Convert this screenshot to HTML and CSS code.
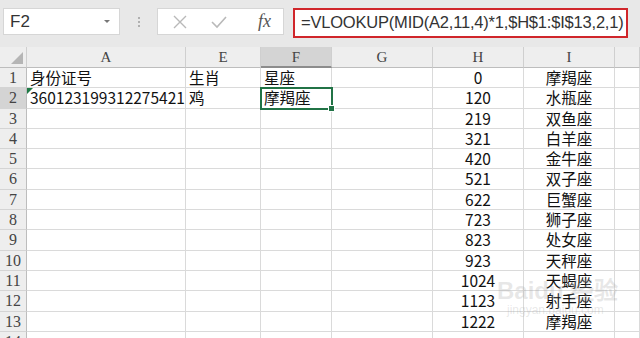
FILE: index.html
```html
<!DOCTYPE html>
<html lang="zh-CN">
<head>
    <meta charset="UTF-8">
    <title>VLOOKUP 星座</title>
    <link rel="stylesheet" href="styles.css">
</head>
<body>
    <div class="topbar">
        <div class="namebox">
            <span>F2</span>
            <span class="arrow"></span>
        </div>
        <div class="grip"><i></i><i></i><i></i></div>
        <div class="btnbox">
            <svg class="ico" width="16" height="16" viewBox="0 0 16 16"><path d="M2 2 L14 14 M14 2 L2 14" stroke="#b9b9b9" stroke-width="1.4" fill="none"/></svg>
            <svg class="ico" width="18" height="16" viewBox="0 0 18 16"><path d="M2 8 L7 13 L16 3" stroke="#b9b9b9" stroke-width="1.6" fill="none"/></svg>
            <span class="fx">fx</span>
        </div>
        <div class="formula">=VLOOKUP(MID(A2,11,4)*1,$H$1:$I$13,2,1)</div>
    </div>

    <div class="sheet">
        <div class="hd corner"><span class="tri"></span></div>
        <div class="hd">A</div><div class="hd">E</div><div class="hd sel">F</div><div class="hd">G</div><div class="hd">H</div><div class="hd">I</div><div class="hd"></div>

        <div class="rn">1</div><div class="c">身份证号</div><div class="c">生肖</div><div class="c">星座</div><div class="c"></div><div class="c ctr">0</div><div class="c ctr">摩羯座</div><div class="c"></div>
        <div class="rn sel">2</div><div class="c err">360123199312275421</div><div class="c">鸡</div><div class="c active">摩羯座<span class="handle"></span></div><div class="c"></div><div class="c ctr">120</div><div class="c ctr">水瓶座</div><div class="c"></div>
        <div class="rn">3</div><div class="c"></div><div class="c"></div><div class="c"></div><div class="c"></div><div class="c ctr">219</div><div class="c ctr">双鱼座</div><div class="c"></div>
        <div class="rn">4</div><div class="c"></div><div class="c"></div><div class="c"></div><div class="c"></div><div class="c ctr">321</div><div class="c ctr">白羊座</div><div class="c"></div>
        <div class="rn">5</div><div class="c"></div><div class="c"></div><div class="c"></div><div class="c"></div><div class="c ctr">420</div><div class="c ctr">金牛座</div><div class="c"></div>
        <div class="rn">6</div><div class="c"></div><div class="c"></div><div class="c"></div><div class="c"></div><div class="c ctr">521</div><div class="c ctr">双子座</div><div class="c"></div>
        <div class="rn">7</div><div class="c"></div><div class="c"></div><div class="c"></div><div class="c"></div><div class="c ctr">622</div><div class="c ctr">巨蟹座</div><div class="c"></div>
        <div class="rn">8</div><div class="c"></div><div class="c"></div><div class="c"></div><div class="c"></div><div class="c ctr">723</div><div class="c ctr">狮子座</div><div class="c"></div>
        <div class="rn">9</div><div class="c"></div><div class="c"></div><div class="c"></div><div class="c"></div><div class="c ctr">823</div><div class="c ctr">处女座</div><div class="c"></div>
        <div class="rn">10</div><div class="c"></div><div class="c"></div><div class="c"></div><div class="c"></div><div class="c ctr">923</div><div class="c ctr">天秤座</div><div class="c"></div>
        <div class="rn">11</div><div class="c"></div><div class="c"></div><div class="c"></div><div class="c"></div><div class="c ctr">1024</div><div class="c ctr">天蝎座</div><div class="c"></div>
        <div class="rn">12</div><div class="c"></div><div class="c"></div><div class="c"></div><div class="c"></div><div class="c ctr">1123</div><div class="c ctr">射手座</div><div class="c"></div>
        <div class="rn">13</div><div class="c"></div><div class="c"></div><div class="c"></div><div class="c"></div><div class="c ctr">1222</div><div class="c ctr">摩羯座</div><div class="c"></div>
        <div class="rn">14</div><div class="c"></div><div class="c"></div><div class="c"></div><div class="c"></div><div class="c"></div><div class="c"></div><div class="c"></div>
    </div>
    <div class="watermark">Baidu 经验<small>jingyan.baidu.com</small></div>
</body>
</html>
```

FILE: styles.css
```css
body {
    margin: 0;
    width: 640px;
    height: 338px;
    overflow: hidden;
    background: #fff;
    font-family: "Noto Sans CJK SC", "Noto Sans", sans-serif;
    position: relative;
}
.topbar {
    height: 47px;
    background: #e8e8e8;
    display: flex;
    align-items: flex-start;
    padding: 8px 0 0 3px;
    box-sizing: border-box;
}
.namebox {
    width: 117px;
    height: 27px;
    background: #fff;
    border: 1px solid #d6d6d6;
    box-sizing: border-box;
    display: flex;
    align-items: center;
    justify-content: space-between;
    padding: 0 9px 0 6px;
    font-family: "Liberation Sans", sans-serif;
    font-size: 17px;
    color: #333;
}
.arrow {
    width: 0;
    height: 0;
    border-left: 3px solid transparent;
    border-right: 3px solid transparent;
    border-top: 3px solid #777;
}
.grip {
    width: 37px;
    height: 27px;
    display: flex;
    flex-direction: column;
    align-items: center;
    justify-content: center;
    gap: 2px;
}
.grip i {
    width: 2px;
    height: 2px;
    background: #b0b0b0;
}
.btnbox {
    width: 127px;
    height: 27px;
    background: #fff;
    border: 1px solid #d6d6d6;
    box-sizing: border-box;
    display: flex;
    align-items: center;
    padding: 0 0 0 14px;
    gap: 22px;
}
.fx {
    font-family: "Liberation Serif", serif;
    font-style: italic;
    font-size: 18px;
    color: #555;
    margin-left: 8px;
}
.formula {
    margin-left: 9px;
    width: 335px;
    height: 30px;
    border: 2px solid #d0262b;
    background: #fff;
    box-sizing: border-box;
    font-family: "Liberation Sans", sans-serif;
    font-size: 16.5px;
    letter-spacing: -0.2px;
    color: #333;
    padding: 3px 0 0 6px;
    white-space: nowrap;
    overflow: hidden;
}
.sheet {
    display: grid;
    grid-template-columns: 27px 159px 75px 71px 101px 91px 91px 1fr;
    grid-template-rows: 21px repeat(14, 20.3px);
    font-size: 15.5px;
    color: #111;
}
.hd {
    background: #eeeeee;
    border-right: 1px solid #cfcfcf;
    border-bottom: 1px solid #bdbdbd;
    font-family: "Liberation Serif", serif;
    font-size: 15px;
    color: #444;
    text-align: center;
    line-height: 20px;
}
.hd.sel {
    background: #d4d4d4;
    border-bottom: 2px solid #8c8c8c;
}
.corner {
    position: relative;
}
.tri {
    position: absolute;
    right: 3px;
    bottom: 3px;
    width: 0;
    height: 0;
    border-left: 12px solid transparent;
    border-bottom: 12px solid #b5b5b5;
}
.rn {
    background: #eeeeee;
    border-right: 1px solid #bdbdbd;
    border-bottom: 1px solid #d4d4d4;
    font-family: "Liberation Serif", serif;
    font-size: 16px;
    color: #444;
    text-align: center;
    line-height: 20px;
}
.rn.sel {
    background: #d4d4d4;
}
.c {
    border-right: 1px solid #dadada;
    border-bottom: 1px solid #dadada;
    padding-left: 3px;
    line-height: 19px;
    white-space: nowrap;
    overflow: visible;
    position: relative;
}
.ctr {
    text-align: center;
    padding-left: 0;
}
.err::before {
    content: "";
    position: absolute;
    left: 0;
    top: 0;
    border-top: 6px solid #1e7a45;
    border-right: 6px solid transparent;
}
.active {
    outline: 2px solid #217346;
    outline-offset: -1px;
    z-index: 2;
}
.handle {
    position: absolute;
    right: -4px;
    bottom: -4px;
    width: 5px;
    height: 5px;
    background: #217346;
    border: 1px solid #fff;
}
.watermark {
    position: absolute;
    left: 497px;
    top: 279px;
    font-family: "Liberation Sans", sans-serif;
    font-size: 24px;
    font-weight: bold;
    color: rgba(160, 160, 160, 0.25);
    line-height: 24px;
    white-space: nowrap;
    pointer-events: none;
}
.watermark small {
    display: block;
    font-size: 12px;
    font-weight: normal;
    line-height: 14px;
    margin-left: 10px;
}
```
